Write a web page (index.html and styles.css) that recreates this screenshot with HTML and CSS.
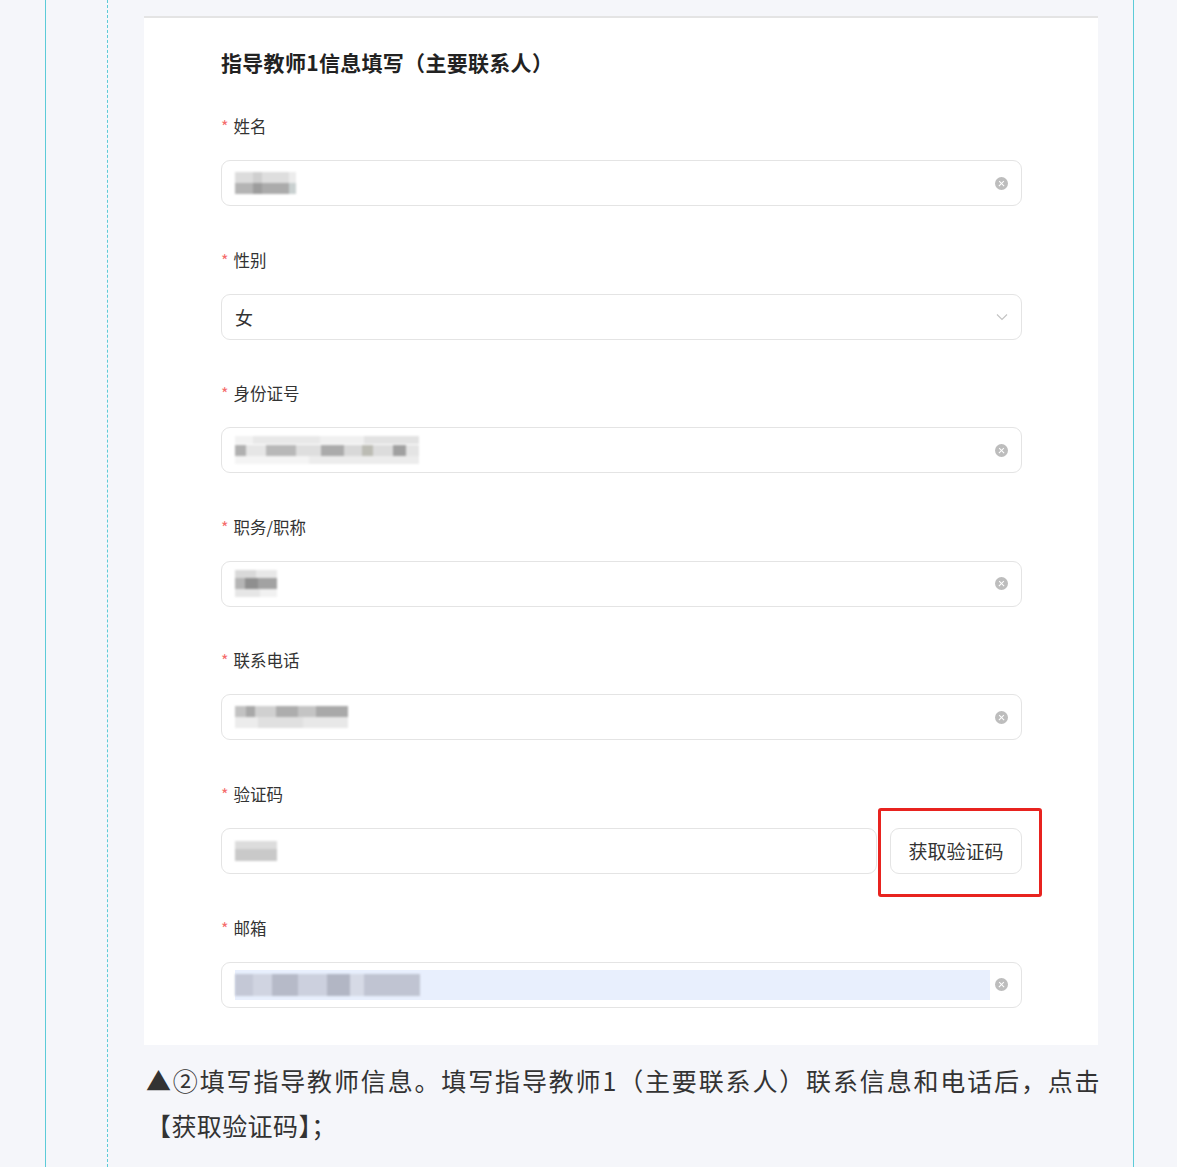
FILE: index.html
```html
<!DOCTYPE html>
<html>
<head>
  <title>指导教师信息填写</title>
  <link rel="stylesheet" href="styles.css">
</head>
<body>
<div class="outer">
  <div class="column">
    <div class="content">
      <div class="card">
        <h2 class="card-title">指导教师1信息填写（主要联系人）</h2>

        <div class="field">
          <div class="label"><span class="req">*</span>姓名</div>
          <div class="input">
            <span class="mosaic m-name"></span>
            <span class="clear"></span>
          </div>
        </div>

        <div class="field">
          <div class="label"><span class="req">*</span>性别</div>
          <div class="input">
            <span class="value">女</span>
            <svg class="arrow" width="12" height="8" viewBox="0 0 12 8"><path d="M1 1.5l5 5 5-5" fill="none" stroke="#c4c4c4" stroke-width="1.2"/></svg>
          </div>
        </div>

        <div class="field">
          <div class="label"><span class="req">*</span>身份证号</div>
          <div class="input">
            <span class="mosaic m-id"></span>
            <span class="clear"></span>
          </div>
        </div>

        <div class="field">
          <div class="label"><span class="req">*</span>职务/职称</div>
          <div class="input">
            <span class="mosaic m-title"></span>
            <span class="clear"></span>
          </div>
        </div>

        <div class="field">
          <div class="label"><span class="req">*</span>联系电话</div>
          <div class="input">
            <span class="mosaic m-phone"></span>
            <span class="clear"></span>
          </div>
        </div>

        <div class="field">
          <div class="label"><span class="req">*</span>验证码</div>
          <div class="code-row">
            <div class="input code-input">
              <span class="mosaic m-code"></span>
            </div>
            <div class="btn-wrap">
              <button class="code-btn" type="button">获取验证码</button>
              <span class="mark"></span>
            </div>
          </div>
        </div>

        <div class="field last">
          <div class="label"><span class="req">*</span>邮箱</div>
          <div class="input">
            <span class="autofill"><span class="mosaic m-mail"></span></span>
            <span class="clear"></span>
          </div>
        </div>
      </div>

      <p class="caption">▲②填写指导教师信息。填写指导教师1（主要联系人）联系信息和电话后，点击【获取验证码】；</p>
    </div>
  </div>
</div>
</body>
</html>
```

FILE: styles.css
```css
body {
  margin: 0;
  background: #f5f6fa;
  font-family: "Noto Sans CJK SC", "Liberation Sans", sans-serif;
  color: #333;
}

.outer {
  margin-left: 45px;
  width: 1087px;
  min-height: 1167px;
  border-left: 1px solid #5ccbd8;
  border-right: 1px solid #5ccbd8;
}

.column {
  margin-left: 61px;
  min-height: 1167px;
  border-left: 1px dashed #5ccbd8;
}

.content {
  padding-left: 36px;
  padding-top: 16px;
}

/* 表单卡片 */
.card {
  width: 954px;
  box-sizing: border-box;
  background: #fff;
  border-top: 2px solid #e4e4e4;
  padding: 31px 76px 37px 77px;
}

.card-title {
  margin: 0 0 41px;
  font-size: 21px;
  line-height: 26px;
  letter-spacing: 0.3px;
  font-weight: 700;
  color: #222;
}

.field {
  margin-bottom: 43.6px;
}

.field.last {
  margin-bottom: 0;
}

.label {
  font-size: 16.5px;
  line-height: 20px;
  height: 20px;
  color: #333;
  margin-bottom: 24px;
}

.req {
  color: #f56c6c;
  margin-right: 5px;
  font-size: 16px;
}

.input {
  height: 46px;
  box-sizing: border-box;
  border: 1px solid #e4e4e4;
  border-radius: 9px;
  display: flex;
  align-items: center;
  padding: 0 13px;
  background: #fff;
}

.value {
  font-size: 18px;
  color: #333;
  flex: 1;
}

.clear {
  width: 13px;
  height: 13px;
  border-radius: 50%;
  background: #bdbdbd;
  margin-left: auto;
  position: relative;
  flex: none;
}

.clear::before,
.clear::after {
  content: "";
  position: absolute;
  left: 3px;
  top: 6px;
  width: 7px;
  height: 1.4px;
  background: #fff;
  transform: rotate(45deg);
}

.clear::after {
  transform: rotate(-45deg);
}

/* 打码区域 */
.mosaic {
  display: block;
  filter: blur(1px);
  flex: none;
}

.m-name {
  width: 61px;
  height: 22px;
  background:
    linear-gradient(90deg, #b4b4b4 0 30%, #9d9d9d 30% 45%, #ababab 45% 88%, #c9d0d0 88%) bottom / 100% 50% no-repeat,
    linear-gradient(90deg, #dcdcdc 0 30%, #cfcfcf 30% 45%, #dedede 45% 88%, #ececec 88%) top / 100% 50% no-repeat;
}

.m-id {
  width: 184px;
  height: 28px;
  background:
    linear-gradient(90deg, #b0b0b0 0 6%, #e6e6e6 6% 17%, #b8b8b8 17% 33%, #dedede 33% 47%, #ababab 47% 59%, #d8d8d8 59% 69%, #bcbcb4 69% 75%, #dcdcdc 75% 86%, #a0a0a0 86% 93%, #e4e4e4 93%) center / 100% 40% no-repeat,
    linear-gradient(90deg, #f2f2f2 0 10%, #e8e8e8 10% 46%, #f0f0f0 46% 70%, #e2e2e2 70% 100%) top / 100% 30% no-repeat,
    linear-gradient(90deg, #f4f4f4 0 40%, #ececec 40% 100%) bottom / 100% 30% no-repeat;
}

.m-title {
  width: 42px;
  height: 28px;
  background:
    linear-gradient(90deg, #b5b5b5 0 25%, #8f8f8f 25% 55%, #a2a2a2 55% 100%) center / 100% 40% no-repeat,
    linear-gradient(90deg, #d9d9d9 0 50%, #e8e8e8 50%) top / 100% 30% no-repeat,
    linear-gradient(90deg, #e6e6e6 0 60%, #f1f1f1 60%) bottom / 100% 30% no-repeat;
}

.m-phone {
  width: 113px;
  height: 22px;
  background:
    linear-gradient(90deg, #c2c2c2 0 10%, #a8a8a8 10% 18%, #d0d0d0 18% 36%, #adadad 36% 56%, #c4c4c4 56% 72%, #a9a9a9 72% 100%) top / 100% 50% no-repeat,
    linear-gradient(90deg, #ececec 0 20%, #e0e0e0 20% 60%, #e8e8e8 60% 100%) bottom / 100% 50% no-repeat;
}

.m-code {
  width: 42px;
  height: 20px;
  background:
    linear-gradient(#dcdcdc 0 40%, #c9c9c9 40% 100%);
}

.autofill {
  flex: 1;
  align-self: stretch;
  margin: 7px 5px 7px 0;
  background: #e8effd;
  display: flex;
  align-items: center;
}

.m-mail {
  width: 185px;
  height: 22px;
  background:
    linear-gradient(90deg, #c4c8d6 0 10%, #d0d4e1 10% 20%, #b6bac8 20% 34%, #ccd0de 34% 50%, #b2b6c4 50% 62%, #d6dae6 62% 70%, #c0c4d2 70% 100%);
}

/* 验证码行 */
.code-row {
  display: flex;
  gap: 13px;
}

.code-input {
  flex: 1;
}

.btn-wrap {
  position: relative;
  flex: none;
}

.code-btn {
  width: 132px;
  height: 46px;
  border: 1px solid #e4e4e4;
  border-radius: 9px;
  background: #fff;
  font-family: inherit;
  font-size: 19px;
  color: #333;
  padding: 0;
}

.mark {
  position: absolute;
  left: -12px;
  top: -20px;
  width: 164px;
  height: 89px;
  box-sizing: border-box;
  border: 3px solid #e8231f;
  border-radius: 3px;
}

/* 说明文字 */
.caption {
  width: 954px;
  margin: 13px 0 0 2px;
  font-size: 25px;
  line-height: 45px;
  letter-spacing: 0.4px;
  text-align: justify;
  text-align-last: left;
  color: #333;
}
```
